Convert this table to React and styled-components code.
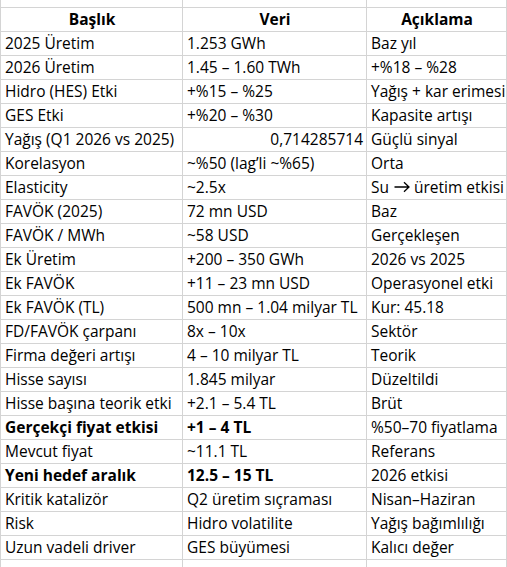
import React from "react";
import styled, { createGlobalStyle } from "styled-components";

const Global = createGlobalStyle`
  html, body { margin: 0; padding: 0; background: #fff; }
  body { font-family: "Open Sans", "Liberation Sans", sans-serif; }
`;

const Sheet = styled.div`
  display: grid;
  grid-template-columns: 182px 184px 1fr;
  border-left: 1px solid #d4d4d4;
  width: 506px;
  height: 567px;
  overflow: hidden;
  color: #000;
  font-size: 15.5px;
`;

const Cell = styled.div`
  box-sizing: border-box;
  height: ${(p) => (p.$spacer ? 8 : 24)}px;
  border-right: 1px solid #d4d4d4;
  border-bottom: 1px solid #d4d4d4;
  padding: 0 3px 1px 4px;
  display: flex;
  align-items: flex-end;
  justify-content: ${(p) =>
    p.$align === "center" ? "center" : p.$align === "right" ? "flex-end" : "flex-start"};
  font-weight: ${(p) => (p.$bold ? 700 : 400)};
  white-space: nowrap;
  overflow: hidden;
  line-height: 21px;
`;

const ArrowSvg = styled.svg`
  width: 16px;
  height: 12px;
  margin: 0 4px 5px 5px;
  flex: none;
`;

const Arrow = () => (
  <ArrowSvg viewBox="0 0 16 12" aria-label="→">
    <path d="M0.5 6H15M10 1.2L15 6L10 10.8" fill="none" stroke="#000" strokeWidth="1.3" />
  </ArrowSvg>
);

const rows = [
  ["2025 Üretim", "1.253 GWh", "Baz yıl"],
  ["2026 Üretim", "1.45 – 1.60 TWh", "+%18 – %28"],
  ["Hidro (HES) Etki", "+%15 – %25", "Yağış + kar erimesi"],
  ["GES Etki", "+%20 – %30", "Kapasite artışı"],
  ["Yağış (Q1 2026 vs 2025)", "0,714285714", "Güçlü sinyal", { right: true }],
  ["Korelasyon", "~%50 (lag’li ~%65)", "Orta"],
  ["Elasticity", "~2.5x", <>Su<Arrow />üretim etkisi</>],
  ["FAVÖK (2025)", "72 mn USD", "Baz"],
  ["FAVÖK / MWh", "~58 USD", "Gerçekleşen"],
  ["Ek Üretim", "+200 – 350 GWh", "2026 vs 2025"],
  ["Ek FAVÖK", "+11 – 23 mn USD", "Operasyonel etki"],
  ["Ek FAVÖK (TL)", "500 mn – 1.04 milyar TL", "Kur: 45.18"],
  ["FD/FAVÖK çarpanı", "8x – 10x", "Sektör"],
  ["Firma değeri artışı", "4 – 10 milyar TL", "Teorik"],
  ["Hisse sayısı", "1.845 milyar", "Düzeltildi"],
  ["Hisse başına teorik etki", "+2.1 – 5.4 TL", "Brüt"],
  ["Gerçekçi fiyat etkisi", "+1 – 4 TL", "%50–70 fiyatlama", { bold: true }],
  ["Mevcut fiyat", "~11.1 TL", "Referans"],
  ["Yeni hedef aralık", "12.5 – 15 TL", "2026 etkisi", { bold: true }],
  ["Kritik katalizör", "Q2 üretim sıçraması", "Nisan–Haziran"],
  ["Risk", "Hidro volatilite", "Yağış bağımlılığı"],
  ["Uzun vadeli driver", "GES büyümesi", "Kalıcı değer"],
];

export default function App() {
  return (
    <>
      <Global />
      <Sheet>
        <Cell $spacer />
        <Cell $spacer />
        <Cell $spacer />
        <Cell $bold $align="center">Başlık</Cell>
        <Cell $bold $align="center">Veri</Cell>
        <Cell $bold $align="center">Açıklama</Cell>
        {rows.map(([a, b, c, o = {}], i) => (
          <React.Fragment key={i}>
            <Cell $bold={o.bold}>{a}</Cell>
            <Cell $bold={o.bold} $align={o.right ? "right" : "left"}>{b}</Cell>
            <Cell>{c}</Cell>
          </React.Fragment>
        ))}
        <Cell />
        <Cell />
        <Cell />
      </Sheet>
    </>
  );
}
